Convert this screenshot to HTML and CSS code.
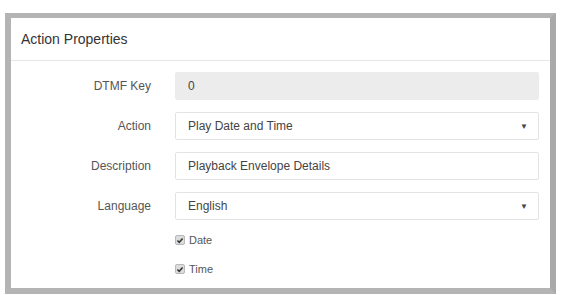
FILE: index.html
```html
<!DOCTYPE html>
<html lang="en">
<head>
    <meta charset="UTF-8">
    <title>Action Properties</title>
    <link rel="stylesheet" href="styles.css">
</head>
<body>
    <div class="frame">
        <div class="panel-heading">Action Properties</div>
        <form class="panel-body">
            <div class="form-row">
                <label class="form-label">DTMF Key</label>
                <div class="form-control readonly">0</div>
            </div>
            <div class="form-row">
                <label class="form-label">Action</label>
                <div class="form-control select">
                    <span>Play Date and Time</span>
                    <span class="caret">&#9660;</span>
                </div>
            </div>
            <div class="form-row">
                <label class="form-label">Description</label>
                <div class="form-control">Playback Envelope Details</div>
            </div>
            <div class="form-row">
                <label class="form-label">Language</label>
                <div class="form-control select">
                    <span>English</span>
                    <span class="caret">&#9660;</span>
                </div>
            </div>
            <div class="check-row">
                <span class="check">
                    <svg width="9" height="9" viewBox="0 0 9 9"><path d="M1.6 4.6 L3.6 6.6 L7.4 2.2" fill="none" stroke="#333" stroke-width="1.7"/></svg>
                </span>
                <span>Date</span>
            </div>
            <div class="check-row">
                <span class="check">
                    <svg width="9" height="9" viewBox="0 0 9 9"><path d="M1.6 4.6 L3.6 6.6 L7.4 2.2" fill="none" stroke="#333" stroke-width="1.7"/></svg>
                </span>
                <span>Time</span>
            </div>
        </form>
    </div>
</body>
</html>
```

FILE: styles.css
```css
/* Page */
body {
    margin: 0;
    background-color: #fff;
    font-family: "Liberation Sans", Arial, sans-serif;
    color: #555;
}

/* Outer frame */
.frame {
    margin: 13px 6px 0 5px;
    height: 270px;
    border: 6px solid #b4b4b4;
    border-top-width: 5px;
    border-right-color: #a9a9a9;
    background-color: #fff;
}

.panel-heading {
    padding: 10px 10px;
    font-size: 14px;
    line-height: 22px;
    color: #333;
    border-bottom: 1px solid #e6e6e6;
}

/* Form */
.panel-body {
    display: flex;
    flex-direction: column;
    gap: 12px;
    padding: 11px 11px 0 0;
}

.form-row {
    display: flex;
    align-items: center;
    gap: 24px;
}

.form-label {
    width: 140px;
    text-align: right;
    font-size: 12px;
    color: #555;
}

.form-control {
    flex: 1;
    display: flex;
    align-items: center;
    justify-content: space-between;
    height: 26px;
    padding: 0 10px 0 12px;
    font-size: 12px;
    color: #444;
    border: 1px solid #e3e3e3;
    border-radius: 2px;
    background-color: #fff;
}

.form-control.readonly {
    background-color: #ececec;
    border-color: #ececec;
}

.caret {
    font-size: 8px;
    color: #444;
}

/* Checkboxes */
.check-row {
    display: flex;
    align-items: center;
    gap: 4px;
    margin: 2px 0 3px 164px;
    font-size: 11px;
    color: #555;
}

.check {
    display: flex;
    align-items: center;
    justify-content: center;
    width: 8px;
    height: 8px;
    border: 1px solid #b8b8b8;
    border-radius: 2px;
    background-color: #dcdcdc;
}
```
